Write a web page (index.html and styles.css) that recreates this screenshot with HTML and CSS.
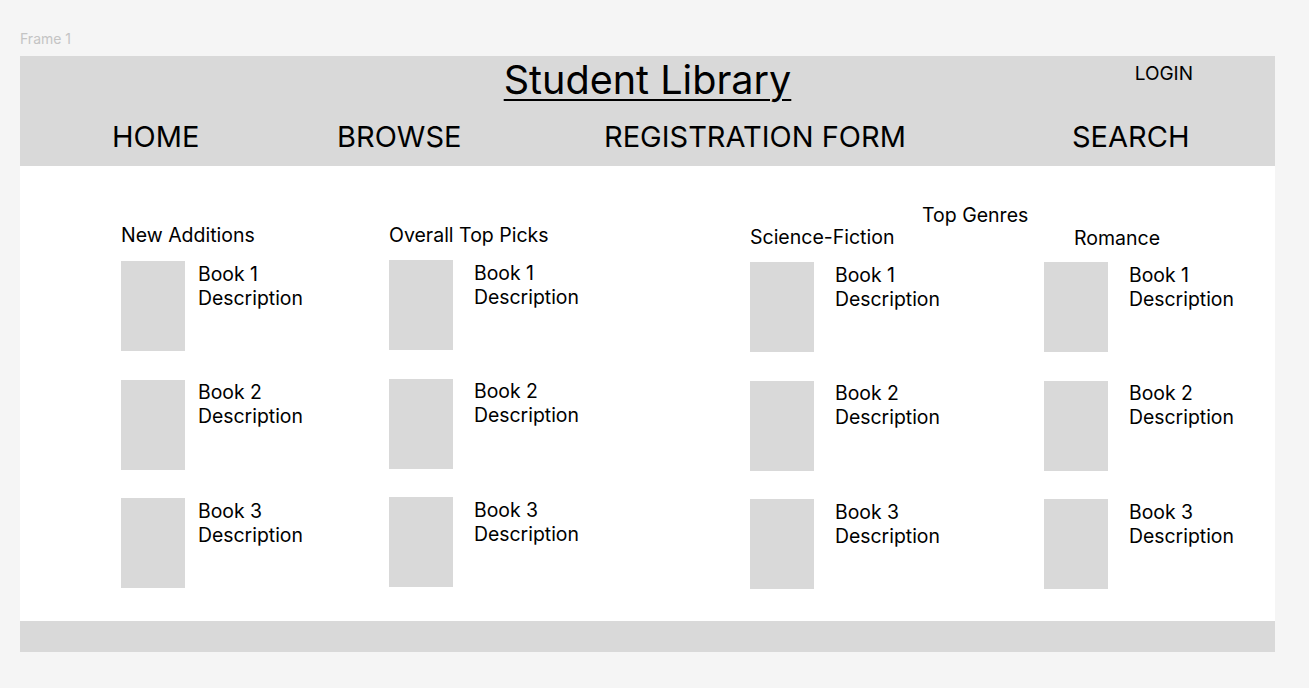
FILE: index.html
```html
<!DOCTYPE html>
<html lang="en">
<head>
<meta charset="utf-8">
<title>Student Library</title>
<link rel="stylesheet" href="styles.css">
</head>
<body>
<div class="canvas">
  <div class="frame-label">Frame 1</div>
  <div class="frame">
    <header class="header">
      <div class="title-row">
        <div></div>
        <h1 class="title">Student Library</h1>
        <div class="login">LOGIN</div>
      </div>
      <nav class="nav">
        <span class="nav-item">HOME</span>
        <span class="nav-item">BROWSE</span>
        <span class="nav-item">REGISTRATION FORM</span>
        <span class="nav-item">SEARCH</span>
      </nav>
    </header>
    <main class="content">
      <section class="col col-new">
        <h2 class="col-label">New Additions</h2>
        <ul class="books books-tight">
          <li class="book"><div class="cover"></div><div class="info">Book 1<br>Description</div></li>
          <li class="book"><div class="cover"></div><div class="info">Book 2<br>Description</div></li>
          <li class="book"><div class="cover"></div><div class="info">Book 3<br>Description</div></li>
        </ul>
      </section>
      <section class="col col-top">
        <h2 class="col-label">Overall Top Picks</h2>
        <ul class="books">
          <li class="book"><div class="cover"></div><div class="info">Book 1<br>Description</div></li>
          <li class="book"><div class="cover"></div><div class="info">Book 2<br>Description</div></li>
          <li class="book"><div class="cover"></div><div class="info">Book 3<br>Description</div></li>
        </ul>
      </section>
      <section class="genres">
        <h2 class="genres-title">Top Genres</h2>
        <div class="genre-grid">
          <div class="col col-scifi">
            <h3 class="col-label">Science-Fiction</h3>
            <ul class="books">
              <li class="book"><div class="cover"></div><div class="info">Book 1<br>Description</div></li>
              <li class="book"><div class="cover"></div><div class="info">Book 2<br>Description</div></li>
              <li class="book"><div class="cover"></div><div class="info">Book 3<br>Description</div></li>
            </ul>
          </div>
          <div class="col col-romance">
            <h3 class="col-label">Romance</h3>
            <ul class="books">
              <li class="book"><div class="cover"></div><div class="info">Book 1<br>Description</div></li>
              <li class="book"><div class="cover"></div><div class="info">Book 2<br>Description</div></li>
              <li class="book"><div class="cover"></div><div class="info">Book 3<br>Description</div></li>
            </ul>
          </div>
        </div>
      </section>
    </main>
    <footer class="footer"></footer>
  </div>
</div>
</body>
</html>
```

FILE: styles.css
```css
* { box-sizing: border-box; }
html, body { margin: 0; padding: 0; }
body {
  background: #f5f5f5;
  font-family: Inter, "Noto Sans", sans-serif;
  color: #000;
  width: 1309px;
  height: 688px;
  overflow: hidden;
}
.canvas {
  padding: 30px 0 0 20px;
}
.frame-label {
  font-size: 14px;
  line-height: 17px;
  color: #c4c4c4;
  margin-bottom: 9px;
}
.frame {
  width: 1255px;
  height: 596px;
  background: #fff;
  display: flex;
  flex-direction: column;
}
.header {
  height: 110px;
  background: #d9d9d9;
  padding-top: 2px;
}
.title-row {
  display: grid;
  grid-template-columns: 1fr auto 1fr;
  align-items: start;
}
.title {
  margin: 0;
  font-size: 39.6px;
  line-height: 44px;
  font-weight: 400;
  text-decoration: underline;
  text-decoration-thickness: 2px;
  text-underline-offset: 5px;
}
.login {
  justify-self: end;
  margin-right: 82px;
  margin-top: 4px;
  font-size: 19px;
  line-height: 23px;
}
.nav {
  display: grid;
  grid-template-columns: 225px 267px 468px auto;
  padding-left: 92px;
  margin-top: 18px;
}
.nav-item {
  font-size: 29px;
  line-height: 34px;
}
.content {
  flex: 1;
  display: grid;
  grid-template-columns: 268px 361px 1fr;
  align-items: start;
  padding: 38px 0 0 101px;
}
.col-label {
  margin: 0;
  font-size: 19.5px;
  line-height: 22px;
  font-weight: 400;
}
.col-new, .col-top { margin-top: 20px; }
.col-new .col-label { margin-bottom: 15px; }
.col-top .col-label { margin-bottom: 14px; }
.genres-title {
  margin: 0 0 0 172px;
  font-size: 19.5px;
  line-height: 22px;
  font-weight: 400;
}
.genre-grid {
  display: grid;
  grid-template-columns: 294px 1fr;
}
.col-scifi .col-label { margin-bottom: 14px; }
.col-romance .col-label { margin: 1px 0 13px 30px; }
.books {
  list-style: none;
  margin: 0;
  padding: 0;
  display: flex;
  flex-direction: column;
  gap: 28.5px;
}
.book {
  display: flex;
  align-items: flex-start;
}
.cover {
  width: 64px;
  height: 90px;
  background: #d9d9d9;
  flex: none;
}
.info {
  margin: 0.5px 0 0 21px;
  font-size: 19.4px;
  line-height: 24px;
}
.books-tight .info { margin-left: 13px; }
.footer {
  height: 31px;
  background: #d9d9d9;
}
```
